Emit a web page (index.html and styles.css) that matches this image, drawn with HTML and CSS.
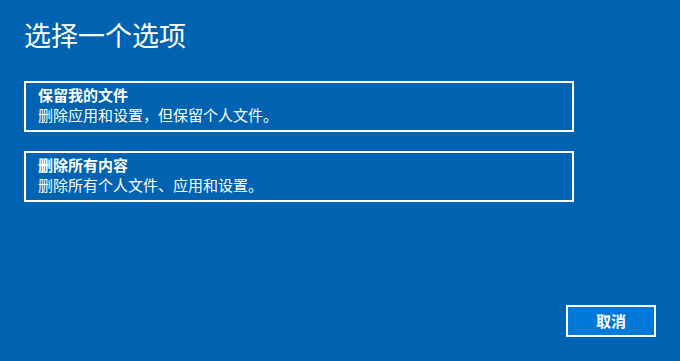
FILE: index.html
```html
<!DOCTYPE html>
<html lang="zh-CN">
<head>
<meta charset="utf-8">
<title>选择一个选项</title>
<link rel="stylesheet" href="styles.css">
</head>
<body>
<div class="page">
  <h1 class="title">选择一个选项</h1>
  <div class="options">
    <div class="option">
      <div class="option-name">保留我的文件</div>
      <div class="option-desc">删除应用和设置，但保留个人文件。</div>
    </div>
    <div class="option">
      <div class="option-name">删除所有内容</div>
      <div class="option-desc">删除所有个人文件、应用和设置。</div>
    </div>
  </div>
  <div class="footer">
    <button class="cancel">取消</button>
  </div>
</div>
</body>
</html>
```
FILE: styles.css
```css
html, body {
  margin: 0;
  padding: 0;
  background: #0063b1;
}
body {
  font-family: "Noto Sans CJK SC", "Noto Sans", sans-serif;
  color: #ffffff;
}
.page {
  box-sizing: border-box;
  width: 680px;
  height: 361px;
  padding: 17px 24px 24px 24px;
  display: flex;
  flex-direction: column;
}
.title {
  margin: 0;
  font-size: 27px;
  line-height: 36px;
  font-weight: normal;
}
.options {
  margin-top: 28px;
  display: flex;
  flex-direction: column;
  gap: 19px;
}
.option {
  box-sizing: border-box;
  width: 550px;
  height: 51px;
  border: 2px solid #ffffff;
  padding: 2px 12px 5px 12px;
}
.option-name {
  font-size: 15px;
  line-height: 20px;
  font-weight: bold;
}
.option-desc {
  font-size: 15px;
  line-height: 20px;
}
.footer {
  margin-top: auto;
  display: flex;
  justify-content: flex-end;
}
.cancel {
  box-sizing: border-box;
  width: 90px;
  height: 32px;
  border: 2px solid #ffffff;
  background: #0078d7;
  color: #ffffff;
  font-family: "Noto Sans CJK SC", "Noto Sans", sans-serif;
  font-size: 15px;
  font-weight: bold;
  padding: 0;
  line-height: 28px;
}
```
